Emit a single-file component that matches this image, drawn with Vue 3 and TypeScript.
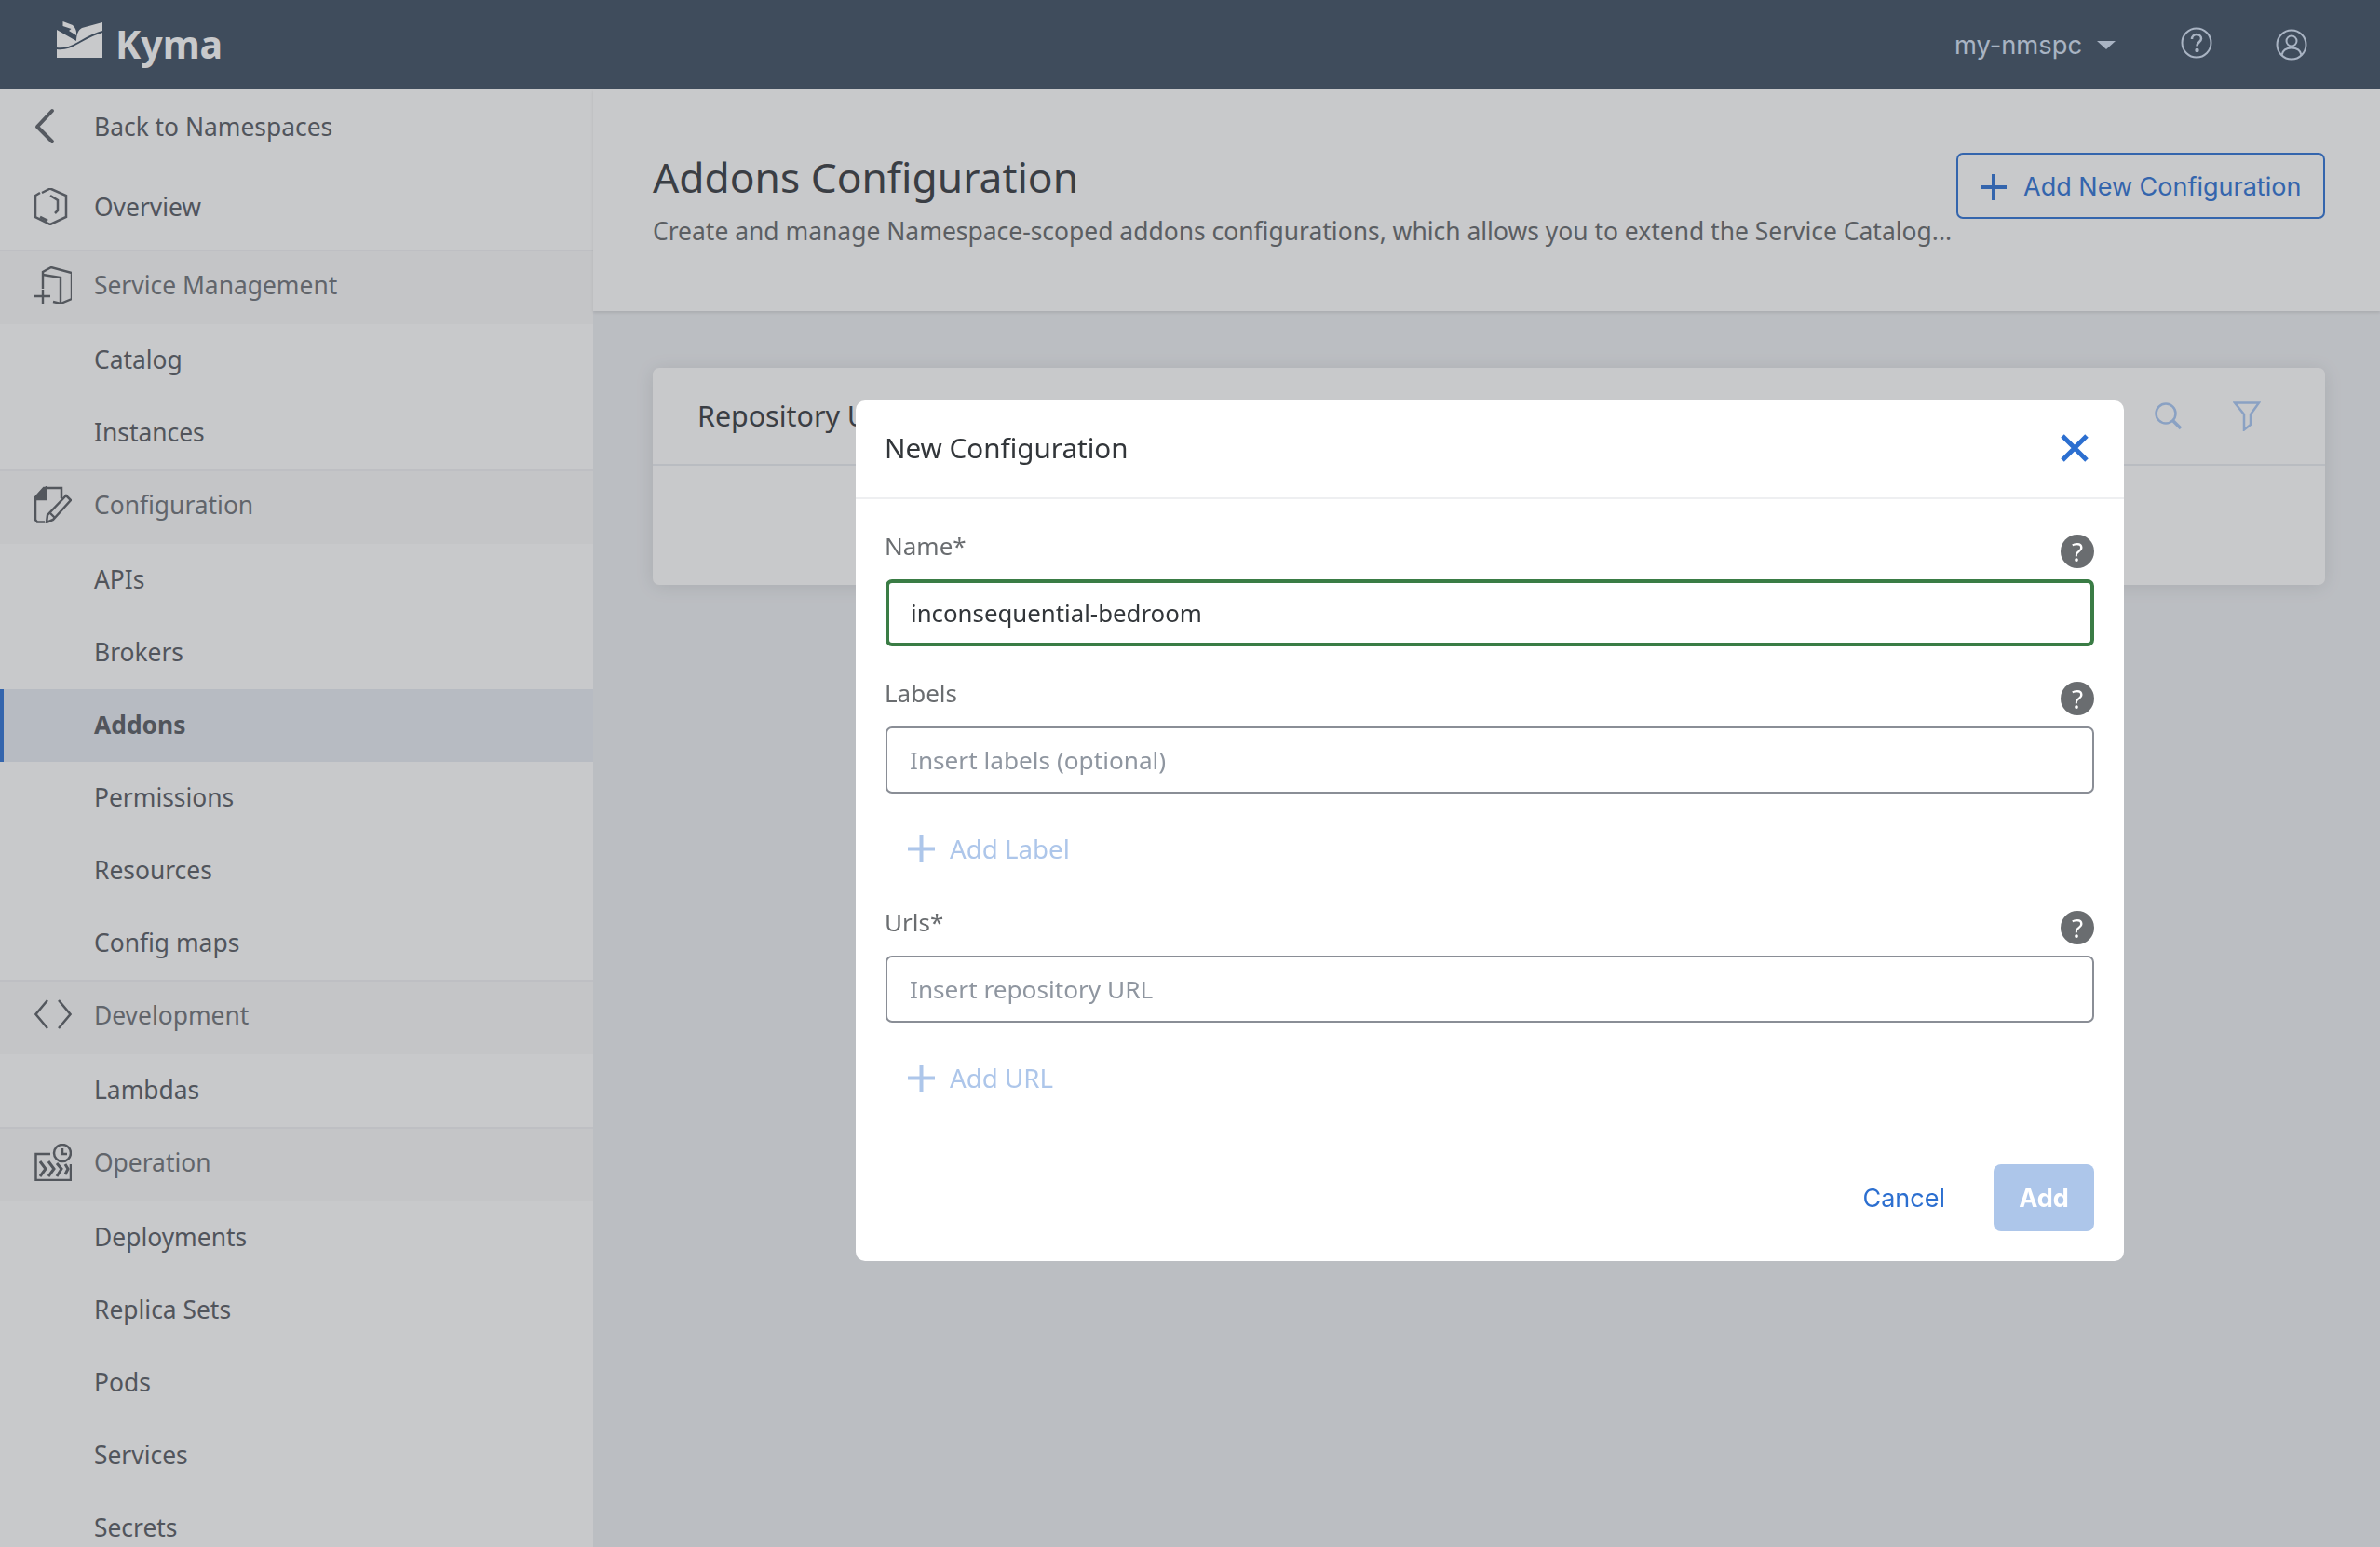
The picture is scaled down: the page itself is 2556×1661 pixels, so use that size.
<template>
  <div class="app">
    <header class="topbar">
      <div class="brand">
        <svg class="logo" width="50" height="40" viewBox="0 0 50 40">
          <path d="M0 9 L21 21 C21 14 23 9 27 7 L49 1 L49 39 L0 39 Z" fill="#fff" />
          <path d="M6.500 0 L17 4 C20 7 21.500 10 21 15 L13 10 L15.500 8 L6.500 5 Z" fill="#fff" />
          <path d="M0 29 C10 30 16 27 23 23 C30 19 38 14 49 11" fill="none" stroke="#445467" stroke-width="2" />
        </svg>
        <span class="brand-name">Kyma</span>
      </div>
      <div class="top-actions">
        <span class="namespace">my-nmspc</span>
        <span class="caret"></span>
        <svg class="top-icon help" width="34" height="34" viewBox="0 0 34 34" fill="none" stroke="#d5e2f5" stroke-width="2">
          <circle cx="17" cy="17" r="15.500" />
          <path d="M12 13 C12 10 14.500 8 17 8 C20 8 22 10 22 12.500 C22 16 17.500 16 17.500 20.500" stroke-width="2.500" />
          <circle cx="17.500" cy="25" r="1.200" fill="#d5e2f5" />
        </svg>
        <svg class="top-icon user" width="34" height="34" viewBox="0 0 34 34" fill="none" stroke="#d5e2f5" stroke-width="2">
          <circle cx="17" cy="17" r="15.500" />
          <circle cx="17" cy="13" r="5.500" />
          <path d="M6.500 28 C7.500 23 11 20.500 17 20.500 C23 20.500 26.500 23 27.500 28" />
        </svg>
      </div>
    </header>

    <div class="body">
      <nav class="sidebar">
        <a class="nav-top back">
          <svg class="nav-icon" width="40" height="40" viewBox="0 0 40 40" fill="none" stroke="#62666d" stroke-width="4" stroke-linecap="round" stroke-linejoin="round">
            <path d="M19 3 L3 20 L19 36" />
          </svg>
          Back to Namespaces
        </a>
        <a class="nav-top overview">
          <svg class="nav-icon" width="40" height="40" viewBox="0 0 40 40" fill="none" stroke="#62666d" stroke-width="2.500">
            <path d="M6 5 L1 8 L1 31 L17 39 L34 31 L34 8 L17 0.500 L8 5" />
            <path d="M17 8 L25 13 L25 24 L22 27" />
            <path d="M6 31 L14 35" stroke-width="3" />
          </svg>
          Overview
        </a>

        <template v-for="group in groups" :key="group.title">
          <div class="group-head">
            <svg class="nav-icon" width="40" height="40" viewBox="0 0 40 40" fill="none" stroke="#5f6369" stroke-width="2.400">
              <template v-if="group.icon === 'service'">
                <path d="M9 24 L9 6 L18 1 L40 7 L40 35 L28 40 L20 38" />
                <path d="M9 9 L28 12 L28 39" />
                <path d="M0 32 L17 32 M9 25 L9 40" />
              </template>
              <template v-else-if="group.icon === 'config'">
                <path d="M11 38.500 L3 38.500 L1 36 L1 12 L10 2 L29 2 L29 13" stroke-width="2.500" />
                <path d="M1 14 L12 2 L12 14 Z" fill="#5f6369" />
                <path d="M13 39 L14 31 L34 10 L39 15 L20 36 Z" stroke-width="2.500" />
                <path d="M17 29 L22 34" />
              </template>
              <template v-else-if="group.icon === 'dev'">
                <path d="M14 4 L1.500 19 L14 34" stroke-width="2.500" />
                <path d="M26 4 L38.500 19 L26 34" stroke-width="2.500" />
              </template>
              <template v-else>
                <circle cx="30" cy="10" r="9" stroke-width="2.500" />
                <path d="M30 5 L30 11 L35 11" stroke-width="2.500" />
                <path d="M17 11 L1.500 11 L1.500 39 L39 39 L39 22" stroke-width="2.500" />
                <path d="M6 19 L12 27 L6 35 M15 19 L21 27 L15 35 M24 21 L29 27 L24 35 M33 22 L36 27 L33 33" stroke-width="3" />
              </template>
            </svg>
            {{ group.title }}
          </div>
          <a v-for="item in group.items" :key="item" class="nav-item" :class="{ active: item === 'Addons' }">{{ item }}</a>
        </template>
      </nav>

      <main class="content">
        <section class="page-head">
          <div class="page-text">
            <h1>Addons Configuration</h1>
            <p>Create and manage Namespace-scoped addons configurations, which allows you to extend the Service Catalog...</p>
          </div>
          <button class="add-config">
            <svg width="28" height="28" viewBox="0 0 28 28" stroke="#3576d6" stroke-width="4"><path d="M14 0 V28 M0 14 H28" /></svg>
            Add New Configuration
          </button>
        </section>

        <section class="card">
          <div class="card-head">
            <h2>Repository URLs</h2>
            <div class="card-tools">
              <svg width="30" height="30" viewBox="0 0 30 30" fill="none" stroke="#abc9f5" stroke-width="2.500">
                <circle cx="12" cy="12" r="10.500" />
                <path d="M19 19 L28 28" stroke-width="3.500" />
              </svg>
              <svg width="30" height="32" viewBox="0 0 30 32" fill="none" stroke="#abc9f5" stroke-width="2.500">
                <path d="M2 1.500 H28 L19 14 V25 L12 30.500 V14 Z" />
              </svg>
            </div>
          </div>
          <div class="card-body"></div>
        </section>
      </main>
    </div>

    <div class="overlay"></div>

    <form class="modal" @submit.prevent>
      <div class="modal-head">
        <h3>New Configuration</h3>
        <svg width="30" height="30" viewBox="0 0 30 30" stroke="#2c6fd0" stroke-width="5"><path d="M2 2 L28 28 M28 2 L2 28" /></svg>
      </div>
      <div class="modal-body">
        <div class="field">
          <div class="field-head"><label>Name*</label><span class="tip">?</span></div>
          <input class="valid" :value="name" readonly />
        </div>
        <div class="field">
          <div class="field-head"><label>Labels</label><span class="tip">?</span></div>
          <input placeholder="Insert labels (optional)" readonly />
          <div class="add-row">
            <svg width="29" height="29" viewBox="0 0 29 29" stroke="#adc6ea" stroke-width="4"><path d="M14.500 0 V29 M0 14.500 H29" /></svg>
            Add Label
          </div>
        </div>
        <div class="field urls">
          <div class="field-head"><label>Urls*</label><span class="tip">?</span></div>
          <input placeholder="Insert repository URL" readonly />
          <div class="add-row">
            <svg width="29" height="29" viewBox="0 0 29 29" stroke="#adc6ea" stroke-width="4"><path d="M14.500 0 V29 M0 14.500 H29" /></svg>
            Add URL
          </div>
        </div>
      </div>
      <div class="modal-foot">
        <button class="cancel" type="button">Cancel</button>
        <button class="submit" type="button">Add</button>
      </div>
    </form>
  </div>
</template>

<script setup lang="ts">
import { ref } from 'vue';

interface NavGroup {
  title: string;
  icon: string;
  items: string[];
}

const name = ref('inconsequential-bedroom');

const groups: NavGroup[] = [
  { title: 'Service Management', icon: 'service', items: ['Catalog', 'Instances'] },
  {
    title: 'Configuration',
    icon: 'config',
    items: ['APIs', 'Brokers', 'Addons', 'Permissions', 'Resources', 'Config maps']
  },
  { title: 'Development', icon: 'dev', items: ['Lambdas'] },
  {
    title: 'Operation',
    icon: 'operation',
    items: ['Deployments', 'Replica Sets', 'Pods', 'Services', 'Secrets']
  }
];
</script>

<style>
html,
body {
  margin: 0;
  overflow: hidden;
}
</style>

<style scoped>
.app {
  height: 100vh;
  overflow: hidden;
  display: flex;
  flex-direction: column;
  background: #eef0f3;
  color: #32363a;
  font-family: "Noto Sans", "Open Sans", sans-serif;
}

.topbar {
  flex: none;
  height: 96px;
  display: flex;
  justify-content: space-between;
  background: #445467;
}

.brand {
  display: flex;
  align-items: flex-start;
  padding: 23px 0 0 61px;
}

.brand-name {
  margin-left: 13px;
  font-size: 41px;
  line-height: 48px;
  font-weight: 700;
  color: #fff;
}

.top-actions {
  display: flex;
  align-items: center;
  padding-right: 78px;
  color: #d5e2f5;
}

.namespace {
  font-family: Inter, sans-serif;
  font-size: 27.300px;
}

.caret {
  margin-left: 16px;
  border-left: 10px solid transparent;
  border-right: 10px solid transparent;
  border-top: 9px solid #d5e2f5;
}

.top-icon {
  margin-left: 69px;
}

.top-icon.help {
  margin-bottom: 4px;
  margin-left: 70px;
}

.top-icon.user {
  margin-left: 68px;
}

.body {
  flex: 1;
  min-height: 0;
  display: flex;
}

.sidebar {
  flex: none;
  width: 637px;
  background: #fff;
  color: #5c6068;
  font-size: 26.400px;
  overflow: hidden;
}

.nav-top,
.group-head {
  display: flex;
  align-items: center;
  padding-left: 37px;
}

.nav-icon {
  flex: none;
  width: 40px;
  margin-right: 24px;
}

.nav-top.back {
  box-sizing: border-box;
  height: 82px;
  padding-bottom: 3px;
}

.nav-top.overview {
  box-sizing: border-box;
  height: 90px;
  padding-bottom: 3px;
}

.group-head {
  box-sizing: border-box;
  height: 80px;
  padding-bottom: 7px;
  border-top: 2px solid #f1f2f4;
  background: #fafafa;
  color: #72767c;
}

.nav-item {
  display: block;
  height: 78px;
  padding-left: 101px;
  line-height: 76px;
}

.nav-item.active {
  padding-left: 97px;
  border-left: 4px solid #3576d6;
  background: #e8ecf3;
  font-weight: 700;
}

.content {
  flex: 1;
  min-width: 0;
}

.page-head {
  box-sizing: border-box;
  height: 238px;
  display: flex;
  justify-content: space-between;
  padding: 68px 59px 0 64px;
  background: #fff;
  box-shadow: 0 2px 3px rgba(0, 0, 0, 0.1);
}

.page-text {
  min-width: 0;
}

h1 {
  margin: 0;
  font-size: 44.300px;
  line-height: 52px;
  font-weight: 400;
  color: #3d4147;
}

.page-text p {
  margin: 14px 0 0;
  font-size: 26.450px;
  line-height: 36px;
  color: #6a6d70;
  white-space: nowrap;
}

.add-config {
  box-sizing: border-box;
  width: 396px;
  height: 71px;
  flex: none;
  display: flex;
  align-items: center;
  gap: 18px;
  padding: 2px 0 0 24px;
  border: 2px solid #3576d6;
  border-radius: 7px;
  background: transparent;
  color: #3576d6;
  font-family: Inter, sans-serif;
  font-size: 27px;
}

.card {
  margin: 61px 59px 0 64px;
  border-radius: 7px;
  background: #fff;
  box-shadow: 0 2px 20px rgba(0, 0, 0, 0.1);
}

.card-head {
  box-sizing: border-box;
  height: 105px;
  display: flex;
  justify-content: space-between;
  align-items: center;
  padding: 0 69px 0 48px;
  border-bottom: 2px solid #ebedf1;
}

h2 {
  margin: 0;
  font-size: 30.400px;
  font-weight: 400;
  color: #3d4147;
}

.card-tools {
  display: flex;
  align-items: center;
  gap: 54px;
}

.card-body {
  height: 128px;
}

.overlay {
  position: fixed;
  inset: 0;
  background: rgba(50, 55, 62, 0.27);
}

.modal {
  position: fixed;
  left: 919px;
  top: 430px;
  box-sizing: border-box;
  width: 1362px;
  height: 924px;
  border-radius: 10px;
  background: #fff;
}

.modal-head {
  box-sizing: border-box;
  height: 106px;
  display: flex;
  justify-content: space-between;
  align-items: center;
  padding: 0 38px 3px 31px;
  border-bottom: 2px solid #eeeff1;
}

h3 {
  margin: 0;
  font-size: 29.600px;
  font-weight: 400;
}

.modal-body {
  padding: 38px 32px 0;
}

.field + .field {
  margin-top: 38px;
}

.field.urls {
  margin-top: 31px;
}

.field-head {
  display: flex;
  justify-content: space-between;
  align-items: flex-start;
  margin-bottom: 12px;
}

label {
  margin-top: -1px;
  margin-left: -1px;
  font-size: 26px;
  line-height: 26px;
  color: #6a6d70;
}

.tip {
  width: 36px;
  height: 36px;
  border-radius: 50%;
  background: #6a6d70;
  color: #fff;
  font-size: 28px;
  line-height: 36px;
  text-align: center;
}

input {
  display: block;
  box-sizing: border-box;
  width: 100%;
  height: 72px;
  padding: 0 24px;
  border: 2px solid #8a8e96;
  border-radius: 7px;
  outline: none;
  font-family: inherit;
  font-size: 26.200px;
  color: #32363a;
}

input.valid {
  padding: 0 23px;
  border: 4px solid #3a7c45;
  font-size: 25.800px;
}

input::placeholder {
  color: #8f96a0;
  opacity: 1;
}

.add-row {
  height: 72px;
  margin-top: 23px;
  display: flex;
  align-items: center;
  gap: 16px;
  padding-left: 24px;
  font-size: 27.700px;
  color: #adc6ea;
}

.modal-foot {
  display: flex;
  justify-content: flex-end;
  align-items: center;
  gap: 52px;
  margin-top: 57px;
  padding-right: 32px;
}

.modal-foot button {
  border: none;
  background: none;
  padding: 0;
  font-family: Inter, sans-serif;
  font-size: 27px;
}

.cancel {
  color: #2c6fd0;
}

.modal-foot .submit {
  width: 108px;
  height: 72px;
  border-radius: 8px;
  background: #adc6ea;
  color: #fff;
  font-weight: 700;
}
</style>
